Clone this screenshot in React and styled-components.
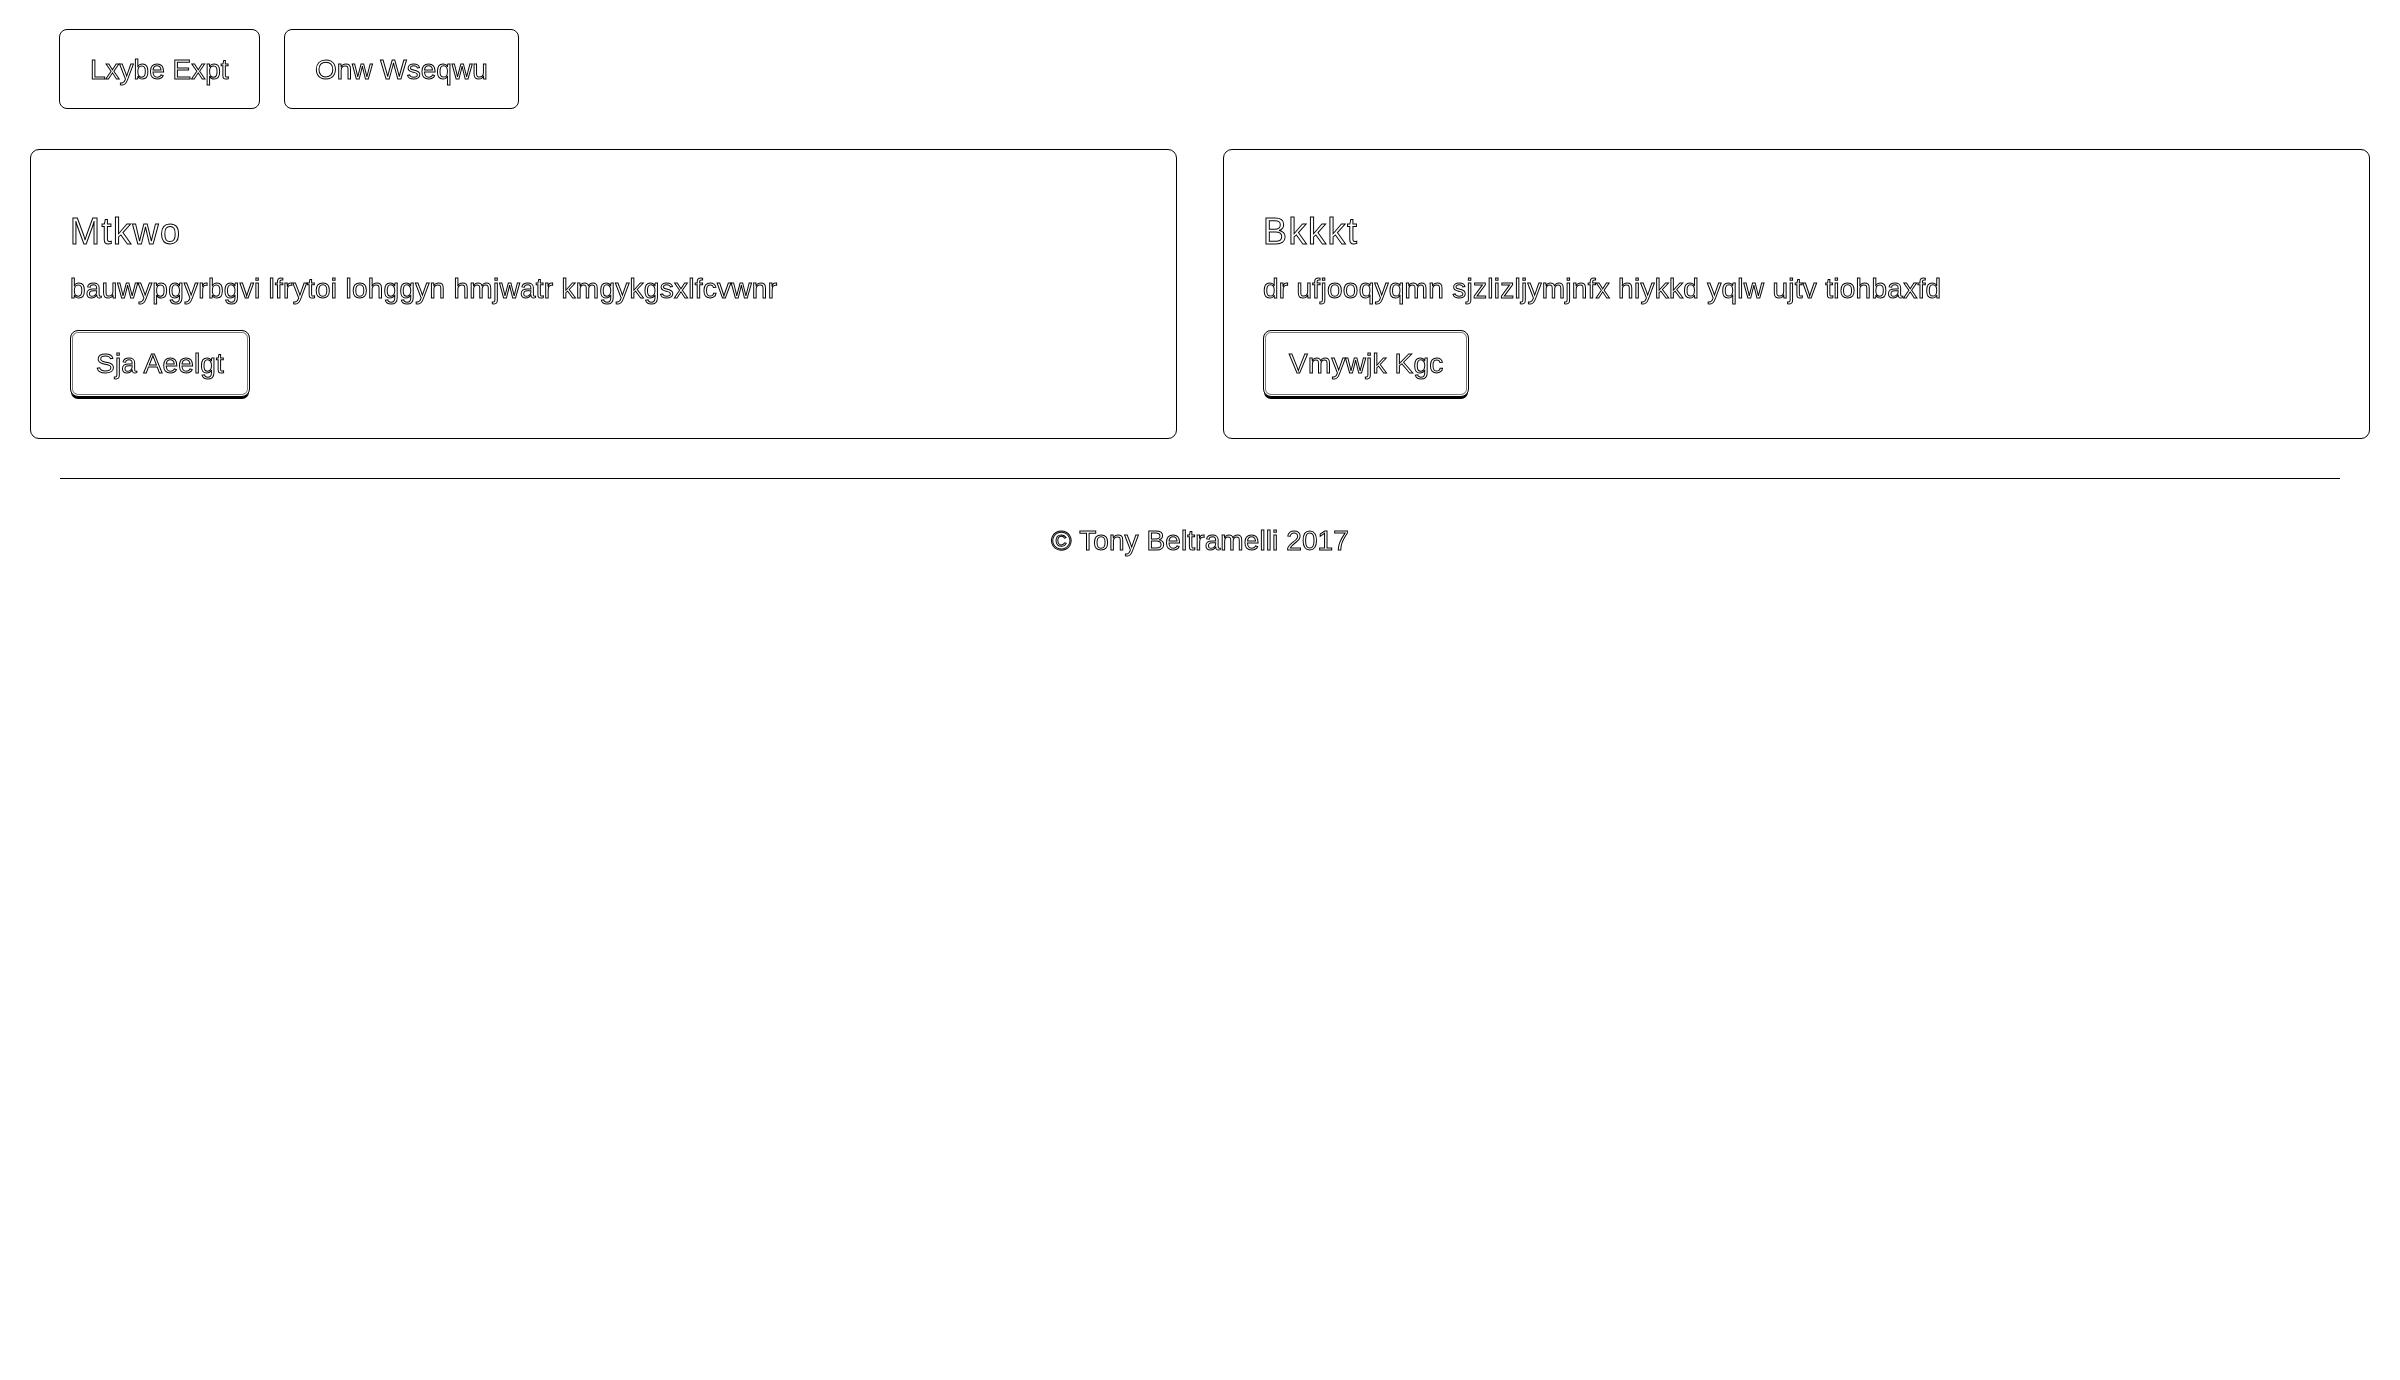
import React from 'react';
import styled, { createGlobalStyle, css } from 'styled-components';

const GlobalStyle = createGlobalStyle`
  html, body {
    margin: 0;
    padding: 0;
    background: #fff;
    font-family: "Liberation Sans", Arial, sans-serif;
  }
`;

// hollow glyphs, grayscale antialiasing
const outlined = css`
  color: #fff;
  -webkit-text-stroke: 1px #000;
  -webkit-font-smoothing: antialiased;
  will-change: transform;
`;

const Page = styled.div`
  width: 2400px;
  padding-top: 29px;
  box-sizing: border-box;
`;

const Nav = styled.nav`
  display: flex;
  gap: 24px;
  padding: 0 59px;
  margin-bottom: 40px;
`;

const Pill = styled.a`
  ${outlined};
  display: block;
  border: 1px solid #000;
  border-radius: 8px;
  padding: 20px 30px 18px;
  font-size: 28px;
  line-height: 40px;
  text-decoration: none;
`;

const Row = styled.div`
  display: grid;
  grid-template-columns: 1fr 1fr;
  gap: 46px;
  padding: 0 30px;
  margin-bottom: 39px;
`;

const Well = styled.div`
  border: 1px solid #000;
  border-radius: 9px;
  padding: 38px 38px 41px 39px;
`;

const Title = styled.h4`
  ${outlined};
  margin: 24px 0 17px;
  font-size: 36px;
  font-weight: 400;
  line-height: 1.1;
  letter-spacing: 1.5px;
`;

const Text = styled.p`
  ${outlined};
  margin: 0 0 21px;
  font-size: 28px;
  line-height: 40px;
  letter-spacing: 0.28px;
`;

const Button = styled.button`
  ${outlined};
  display: inline-block;
  background: #fff;
  border: 1px solid #000;
  border-radius: 8px;
  padding: 13px 25px 12px;
  font-family: inherit;
  font-size: 28px;
  line-height: 40px;
  letter-spacing: 0.2px;
  box-shadow: inset 0 0 0 1px #fff, inset 0 0 0 2px #777, 0 3px 0 -1px #000;
`;

const Rule = styled.hr`
  border: 0;
  border-top: 1px solid #000;
  margin: 0 60px 42px;
`;

const Footer = styled.footer`
  p {
    ${outlined};
    margin: 0;
    text-align: center;
    font-size: 28px;
    line-height: 40px;
    letter-spacing: 0.1px;
  }
`;

const cards = [
  {
    title: 'Mtkwo',
    text: 'bauwypgyrbgvi lfrytoi lohggyn hmjwatr kmgykgsxlfcvwnr',
    action: 'Sja Aeelgt',
  },
  {
    title: 'Bkkkt',
    text: 'dr ufjooqyqmn sjzlizljymjnfx hiykkd yqlw ujtv tiohbaxfd',
    action: 'Vmywjk Kgc',
  },
];

export default function App() {
  return (
    <>
      <GlobalStyle />
      <Page>
        <Nav>
          <Pill href="#">Lxybe Expt</Pill>
          <Pill href="#">Onw Wseqwu</Pill>
        </Nav>
        <Row>
          {cards.map(card => (
            <Well key={card.title}>
              <Title>{card.title}</Title>
              <Text>{card.text}</Text>
              <Button type="button">{card.action}</Button>
            </Well>
          ))}
        </Row>
        <Rule />
        <Footer>
          <p>© Tony Beltramelli 2017</p>
        </Footer>
      </Page>
    </>
  );
}
